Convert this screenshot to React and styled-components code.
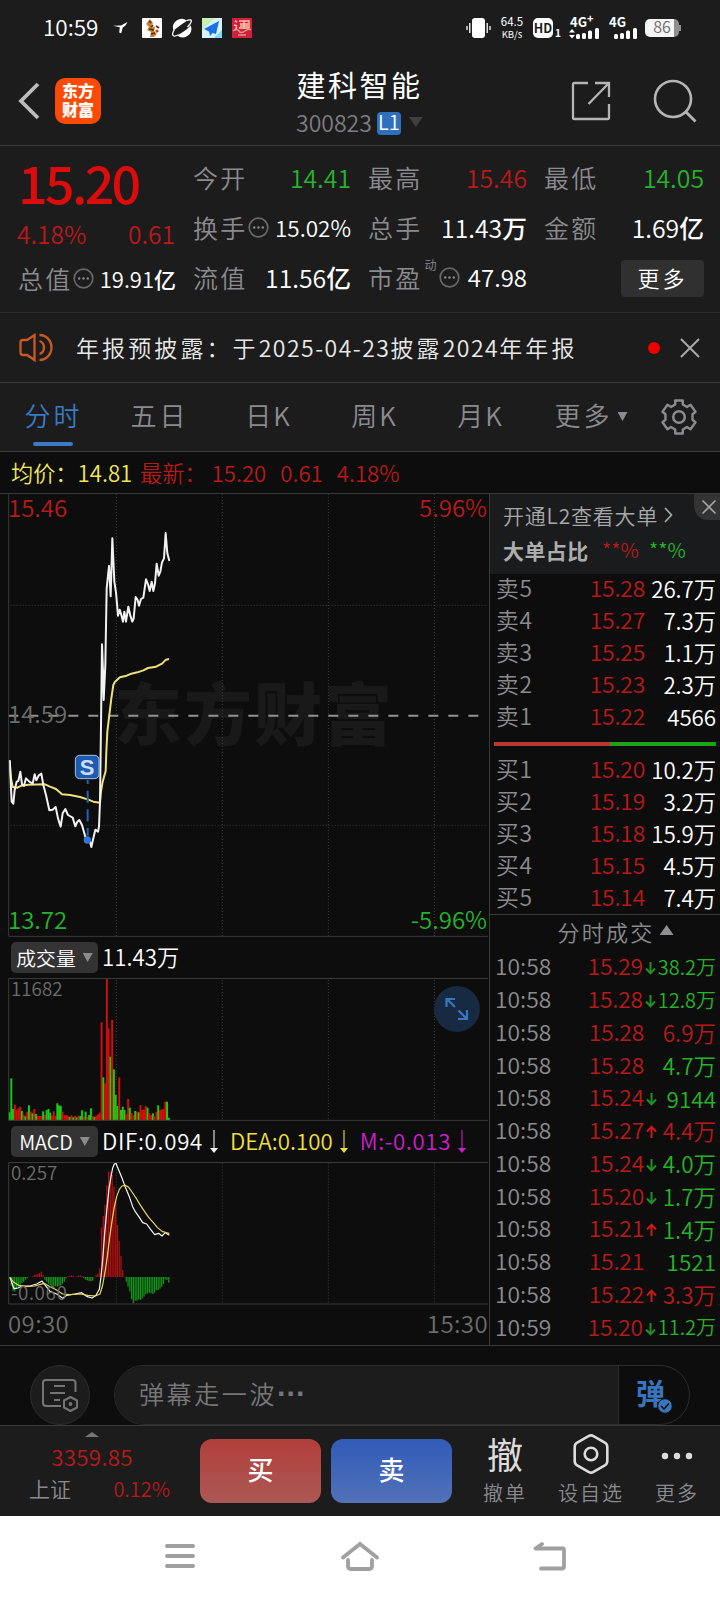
import styled, { createGlobalStyle } from 'styled-components';

const RED = '#b81919';
const GREEN = '#25b32b';
const GRAY = '#8b8b8f';
const LINE = '#3a3a3a';

const tabs = ['五日', '日K', '周K', '月K'];

const stats = [
  { label: '今开', value: '14.41', color: GREEN },
  { label: '最高', value: '15.46', color: RED },
  { label: '最低', value: '14.05', color: GREEN },
  { label: '换手', value: '15.02%', dots: true, size: 22.5 },
  { label: '总手', value: '11.43', unit: '万' },
  { label: '金额', value: '1.69', unit: '亿' },
  { label: '流值', value: '11.56', unit: '亿' },
  { label: '市盈', value: '47.98', sup: '动', dots: true, size: 24 },
];

const sells = [
  ['卖5', '15.28', '26.7万'],
  ['卖4', '15.27', '7.3万'],
  ['卖3', '15.25', '1.1万'],
  ['卖2', '15.23', '2.3万'],
  ['卖1', '15.22', '4566'],
];

const buys = [
  ['买1', '15.20', '10.2万'],
  ['买2', '15.19', '3.2万'],
  ['买3', '15.18', '15.9万'],
  ['买4', '15.15', '4.5万'],
  ['买5', '15.14', '7.4万'],
];

const ticks = [
  ['10:58', '15.29', 'down', '38.2万', GREEN],
  ['10:58', '15.28', 'down', '12.8万', GREEN],
  ['10:58', '15.28', '', '6.9万', RED],
  ['10:58', '15.28', '', '4.7万', GREEN],
  ['10:58', '15.24', 'down', '9144', GREEN],
  ['10:58', '15.27', 'up', '4.4万', RED],
  ['10:58', '15.24', 'down', '4.0万', GREEN],
  ['10:58', '15.20', 'down', '1.7万', GREEN],
  ['10:58', '15.21', 'up', '1.4万', GREEN],
  ['10:58', '15.21', '', '1521', GREEN],
  ['10:58', '15.22', 'up', '3.3万', RED],
  ['10:59', '15.20', 'down', '11.2万', GREEN],
];

// one entry per minute: colour + height
const volumes =
  'g24 g126 g34 r47 r31 r36 r41 g28 r17 g12 r26 g45 r26 g21 r34 g19 r13 r13 r13 g27 r16 g31 g34 g23 r14 r27 r13 g51 g45 g43 r26 r16 r16 r13 g10 r15 g9 r13 g9 r14 g13 g30 r10 g26 r11 g16 g36 r14 g10 r14 r18 r23 r294 g129 r111 r424 r276 g191 r301 g153 g76 g43 r129 g31 g41 g31 r19 r64 g38 r22 r15 g28 r26 g24 r46 r31 r33 r43 g38 r22 r16 g21 r12 r26 g45 r31 r33 r34 r56 g56 g8'
    .split(' ');

// positive goes up from the zero line
const macd = [
  -6, -26, -42, -44, -36, -30, -25, -18, -14, -8, -4, 0, 0, 2, 6, 8, 9, 12, 16, 6,
  -8, -14, -20, -25, -27, -28, -27, -29, -27, -25, -20, -14, -4, 2, 4, 5, 4, 0, 2, 4,
  5, 3, -3, -8, -10, -12, -13, -11, 0, 6, 11, 26, 149, 183, 216, 276, 316, 316, 306, 271,
  221, 156, 108, 63, 21, 0, -14, -29, -44, -67, -79, -71, -71, -67, -69, -64, -59, -51, -49, -47,
  -49, -51, -47, -39, -39, -35, -29, -21, -7, -9, -17,
];

const barX = (i) => 28.5 + i * 5.31;

const Grid = ({ top, bottom }) => (
  <g stroke="#4a4a4a" strokeWidth="2.4" strokeDasharray="3 6">
    {[349, 667, 985, 1303].map((x) => (
      <line key={x} x1={x} x2={x} y1={top} y2={bottom} />
    ))}
  </g>
);

const PriceChart = () => (
  <ChartSvg viewBox="0 27 1467 1329">
    <Grid top={27} bottom={1353} />
    <g stroke="#4a4a4a" strokeWidth="2.4" strokeDasharray="3 6">
      <line x1="32" x2="1464" y1="361" y2="361" />
      <line x1="32" x2="1464" y1="1021" y2="1021" />
    </g>
    <line x1="25" x2="1436" y1="692" y2="692" stroke="#929292" strokeWidth="6" strokeDasharray="30 30" />
    <polyline
      fill="none" stroke="#f0e078" strokeWidth="6" strokeLinejoin="round"
      points="29,828 33,880 38,906 52,908 64,902 85,899 135,898 150,905 168,912 186,928 210,930 240,936 265,944 280,950 300,953 303,920 308,890 317,858 319,800 322,740 328,690 334,640 340,600 345,590 360,577 380,572 394,566 412,562 430,556 444,549 468,545 486,536 498,524 507,522"
    />
    <polyline
      fill="none" stroke="#f2f2f2" strokeWidth="6" strokeLinejoin="round"
      points="29,825 32,890 35,950 40,956 44,915 50,890 55,888 61,860 66,898 72,902 78,880 88,890 98,896 104,868 109,886 116,872 124,866 130,900 138,930 148,976 158,974 167,966 174,1000 182,1025 188,985 196,972 204,990 218,998 226,1024 232,1010 238,1005 246,1020 256,1055 264,1068 270,1070 274,1086 280,1060 286,1034 294,1040 297,1025 300,950 303,720 306,478 309,560 311,645 316,540 320,310 327,243 332,334 337,160 343,290 348,322 354,392 359,374 364,390 369,410 373,380 378,410 385,365 391,392 397,410 401,400 407,336 413,345 417,362 423,342 430,338 438,283 444,298 449,318 455,290 460,318 465,295 470,236 476,272 481,260 486,232 492,220 497,144 502,205 508,228"
    />
    <line x1="263" x2="263" y1="885" y2="1052" stroke="#2462b4" strokeWidth="6" strokeDasharray="36 20" strokeDashoffset="24" />
    <circle cx="262" cy="1065" r="11" fill="#2b78dc" />
    <rect x="226" y="811" width="71" height="70" rx="13" fill="#1e5cb3" stroke="#a9bfdd" strokeWidth="3" />
    <path d="M26 27V1354H1464" fill="none" stroke={LINE} strokeWidth="3" />
  </ChartSvg>
);

const VolumeChart = () => (
  <ChartSvg viewBox="0 114 1467 429">
    <Grid top={120} bottom={540} />
    {volumes.map((v, i) => {
      const h = Number(v.slice(1));
      return <rect key={i} x={barX(i) - 2.9} y={541 - h} width="5.8" height={h} fill={v[0] === 'r' ? '#d60d0d' : '#15cf15'} />;
    })}
    <path d="M1464 115.5H26V541H1464" fill="none" stroke={LINE} strokeWidth="3" />
  </ChartSvg>
);

const MacdChart = () => (
  <ChartSvg viewBox="0 666 1467 429">
    <Grid top={670} bottom={1092} />
    {macd.map((v, i) => (
      <rect key={i} x={barX(i) - 2} y={v > 0 ? 1011 - v : 1011} width="3.8" height={Math.abs(v)} fill={v > 0 ? '#b01010' : '#12961a'} />
    ))}
    <polyline
      fill="none" stroke="#f5f5f5" strokeWidth="3.6" strokeLinejoin="round"
      points="30,1012 36,1030 42,1046 54,1044 66,1038 90,1038 110,1032 126,1023 136,1036 150,1054 170,1062 188,1075 200,1066 224,1062 245,1058 262,1070 276,1074 288,1066 298,1048 303,1010 308,960 314,880 320,815 327,745 333,710 338,684 343,672 348,670 356,690 366,714 376,742 388,770 398,800 406,815 418,832 428,848 440,852 450,866 464,884 476,880 486,888 496,878 508,886"
    />
    <polyline
      fill="none" stroke="#e8d85a" strokeWidth="3.6" strokeLinejoin="round"
      points="30,1012 40,1026 56,1036 76,1040 104,1038 132,1030 150,1040 170,1050 188,1062 210,1064 240,1062 264,1066 286,1068 300,1062 308,1035 316,990 322,950 328,900 335,850 342,805 350,770 358,748 366,738 376,736 386,742 396,756 408,774 420,794 432,812 446,832 460,848 472,862 486,874 498,878 508,880"
    />
    <path d="M1464 667.5H26V1092H1464" fill="none" stroke={LINE} strokeWidth="3" />
  </ChartSvg>
);

const Dots = () => (
  <svg width="21" height="21" viewBox="0 0 21 21">
    <circle cx="10.5" cy="10.5" r="9.3" fill="none" stroke="#68686b" strokeWidth="1.7" />
    <g fill="#8b8b8f">
      <circle cx="6.2" cy="10.5" r="1.2" />
      <circle cx="10.5" cy="10.5" r="1.2" />
      <circle cx="14.8" cy="10.5" r="1.2" />
    </g>
  </svg>
);

const Arrow = ({ dir, color }) => (
  <svg width="11" height="16" viewBox="0 0 11 16">
    <path
      d={dir === 'up' ? 'M5.5 14V3M1 7.5 5.5 2.8 10 7.5' : 'M5.5 2V13M1 8.5 5.5 13.2 10 8.5'}
      fill="none" stroke={color} strokeWidth="2"
    />
  </svg>
);

const LongArrow = ({ color }) => (
  <svg width="10" height="24" viewBox="0 0 10 24">
    <path d="M5 0V22" stroke={color} strokeWidth="1.1" />
    <path d="M1 18h8L5 23z" fill={color} />
  </svg>
);

const Signal = ({ bars }) => (
  <>
    {bars.map(([x, h]) => (
      <rect key={x} x={x} y={22 - h} width="4" height={h} rx="1.5" fill="#fff" />
    ))}
  </>
);

const App = () => {
  return (
    <Screen>
      <Global />
      <StatusBar>
        <Clock>10:59</Clock>
        <NotifyIcons>
          <svg width="15" height="12" viewBox="0 0 15 12">
            <path d="M0 3.8 8 3.4 14.5 0 12.5 3.5 9.8 5.5 8.2 11.3 6.2 10.6 6.8 5.2z" fill="#fff" />
          </svg>
          <svg width="20" height="20" viewBox="0 0 20 20">
            <rect width="20" height="20" rx="1" fill="#fff" />
            <path d="M8 1 11 5 9 8 13 9 12 13 15 16 12 19H8L9 14 5 12 7 9 4 6z" fill="#c9822c" />
            <path d="M7 3 9 5M11 7 9 9M7 11 12 12M14 8 17 10M9 16 13 15" stroke="#4b3018" strokeWidth="1.6" />
            <circle cx="15" cy="13" r="1.6" fill="#cf3b20" />
          </svg>
          <svg width="20" height="20" viewBox="0 0 20 20">
            <path d="M1.5 12.5A8.7 8.7 0 0 1 15 2.7Q9 6.5 1.5 12.5z" fill="#fff" />
            <path d="M18.7 7.5A8.7 8.7 0 0 1 5 17.3Q12.5 14 18.7 7.5z" fill="#fff" />
            <path d="M14.5 2.5Q20.5 .5 19 4.2 18 6.5 15.5 9M2.5 11.5Q-.5 16 1.2 17.6 2.5 18.8 6 17" fill="none" stroke="#fff" strokeWidth="1.3" />
          </svg>
          <svg width="20" height="20" viewBox="0 0 20 20">
            <rect width="20" height="20" fill="#d4f4ff" />
            <path d="M0 0h13L0 12z" fill="#c8efb4" />
            <path d="M12 20 20 12V20z" fill="#7fdcf7" />
            <path d="M17 3 2 11 7 13.5 8 18 10.5 15 14 16z" fill="#1c6fe8" />
          </svg>
          <svg width="20" height="20" viewBox="0 0 20 20">
            <rect width="20" height="20" rx="1" fill="#d31f3c" />
            <path d="M3 3 5 4M2 7 5 8M3 12 5 9M7 3H17V10H7M8 6H16M12 3V11M8 8H16" fill="none" stroke="#f6c9a8" strokeWidth="1.4" />
            <path d="M1 13Q5 10 7 13T13 13T19 12M6 17H14" fill="none" stroke="#d69a8c" strokeWidth="1.5" />
          </svg>
        </NotifyIcons>
        <StatusRight>
          <svg width="25" height="20" viewBox="0 0 25 20">
            <rect x="6" width="13" height="20" rx="3" fill="#fff" />
            <path d="M1 8V12M3.8 5V15M21.2 5V15M24 8V12" stroke="#fff" strokeWidth="1.3" />
          </svg>
          <NetSpeed>
            <span>64.5</span>
            <small>KB/s</small>
          </NetSpeed>
          <HdBadge>
            <b>HD</b>
            <i>1</i>
          </HdBadge>
          <SignalBox $w={32}>
            <span>4G<q>+</q></span>
            <svg width="31" height="22" viewBox="0 0 31 22">
              <path d="M0 15.5 3 12 6 15.5zM0 18 3 21.5 6 18z" fill="#fff" />
              <Signal bars={[[7, 5], [13, 6], [19, 8.5], [26, 11]]} />
            </svg>
          </SignalBox>
          <SignalBox $w={30}>
            <span>4G</span>
            <svg width="31" height="22" viewBox="0 0 31 22">
              <Signal bars={[[6, 5], [12, 6], [18, 8.5], [25, 11]]} />
            </svg>
          </SignalBox>
          <Battery>86</Battery>
        </StatusRight>
      </StatusBar>

      <Header>
        <HeaderSide>
          <svg width="22" height="38" viewBox="0 0 22 38">
            <path d="M20 2 3 19 20 36" fill="none" stroke="#bdbdbd" strokeWidth="3.8" />
          </svg>
          <Logo><span>东方</span><span>财富</span></Logo>
        </HeaderSide>
        <Title>
          <h1>建科智能</h1>
          <p>
            300823<em>L1</em>
            <Triangle $w={14} $h={10} $color="#3f3f3f" />
          </p>
        </Title>
        <HeaderSide $right>
          <svg width="40" height="40" viewBox="0 0 40 40">
            <path d="M17 2H3.5A1.5 1.5 0 0 0 2 3.5V36.5A1.5 1.5 0 0 0 3.5 38H36.5A1.5 1.5 0 0 0 38 36.5V23M24 2H38V16M38 2 17.5 23" fill="none" stroke="#b5b5b5" strokeWidth="2.3" />
          </svg>
          <svg width="44" height="44" viewBox="0 0 44 44">
            <circle cx="20" cy="20" r="18" fill="none" stroke="#b5b5b5" strokeWidth="2.6" />
            <path d="M32.5 32.5 42.5 42.5" stroke="#b5b5b5" strokeWidth="2.8" />
          </svg>
        </HeaderSide>
      </Header>

      <Quote>
        <QuoteMain>
          <Price>15.20</Price>
          <Change>
            <span>4.18%</span>
            <span>0.61</span>
          </Change>
          <Stat>
            <label>总值</label>
            <Dots />
            <StatValue $size={22}>19.91<u>亿</u></StatValue>
          </Stat>
        </QuoteMain>
        <StatGrid>
          {stats.map((s) => (
            <Stat key={s.label}>
              <label>{s.label}</label>
              {s.sup && <sup>{s.sup}</sup>}
              {s.dots && <Dots />}
              <StatValue $color={s.color} $size={s.size}>{s.value}{s.unit && <u>{s.unit}</u>}</StatValue>
            </Stat>
          ))}
          <MoreButton>更多</MoreButton>
        </StatGrid>
      </Quote>

      <News>
        <svg width="35" height="30" viewBox="0 0 35 30">
          <path d="M15.5 2V27L8 22H4Q1.5 22 1.5 19.5V9.5Q1.5 7 4 7H8zM20.5 2A12 12.5 0 0 1 20.5 27M20.5 8A6.3 6.8 0 0 1 20.5 21" fill="none" stroke="#cc5a20" strokeWidth="2.3" />
        </svg>
        <p>年报预披露：于<span>2025-04-23</span>披露<span>2024</span>年年报</p>
        <RedDot />
        <svg width="20" height="20" viewBox="0 0 20 20">
          <path d="M1 1 19 19M19 1 1 19" stroke="#a8a8a8" strokeWidth="2" />
        </svg>
      </News>

      <Tabs>
        <Tab $active>分时</Tab>
        {tabs.map((t) => (
          <Tab key={t} $shift={t.endsWith('K') ? 6 : 0}>{t}</Tab>
        ))}
        <Tab $wide>更多<Triangle $w={10} $h={9} $color={GRAY} /></Tab>
        <svg width="36" height="36" viewBox="0 0 36 36">
          <path
            d="M14.2 1.5H21.8V5.5L26 8 29.5 5.8 34.5 12.8 31.5 15.2V20.8L34.5 23.2 29.5 30.2 26 28 21.8 30.5V34.5H14.2V30.5L10 28 6.5 30.2 1.5 23.2 4.5 20.8V15.2L1.5 12.8 6.5 5.8 10 8 14.2 5.5z"
            fill="none" stroke={GRAY} strokeWidth="2.4" strokeLinejoin="round"
          />
          <circle cx="18" cy="18" r="5.8" fill="none" stroke={GRAY} strokeWidth="2.5" />
        </svg>
      </Tabs>

      <AvgBar>
        <Avg>均价：<span>14.81</span></Avg>
        <span>最新：</span>
        <span>15.20</span>
        <span>0.61</span>
        <span>4.18%</span>
      </AvgBar>

      <Main>
        <Charts>
          <PricePane>
            <Watermark>东方财富</Watermark>
            <PriceChart />
            <SellMark>S</SellMark>
            <AxisRow $color={RED}><span>15.46</span><span>5.96%</span></AxisRow>
            <AxisRow $color="#6c6c6c"><span>14.59</span></AxisRow>
            <AxisRow $color={GREEN}><span>13.72</span><span>-5.96%</span></AxisRow>
          </PricePane>
          <PaneHead>
            <Chip>成交量<Triangle $w={10} $h={9} $color={GRAY} /></Chip>
            <span>11.43万</span>
          </PaneHead>
          <SubPane>
            <VolumeChart />
            <small>11682</small>
            <Expand>
              <svg width="24" height="24" viewBox="0 0 24 24">
                <path d="M10 10 2 2M1.5 10V2H10M13.5 13.5 21.5 21.5M22 13V22H13" fill="none" stroke="#3678c4" strokeWidth="2.2" />
              </svg>
            </Expand>
          </SubPane>
          <PaneHead>
            <Chip>MACD<Triangle $w={10} $h={9} $color={GRAY} /></Chip>
            <Dif>DIF:0.094</Dif>
            <LongArrow color="#eee" />
            <Dea>DEA:0.100</Dea>
            <LongArrow color="#efdf3c" />
            <Hist>M:-0.013</Hist>
            <LongArrow color="#cb1fcb" />
          </PaneHead>
          <SubPane>
            <MacdChart />
            <small>0.257</small>
            <small>-0.060</small>
          </SubPane>
          <TimeRow><span>09:30</span><span>15:30</span></TimeRow>
        </Charts>

        <Side>
          <Promo>
            <p>开通L2查看大单
              <svg width="9" height="16" viewBox="0 0 9 16"><path d="M1 1 7.5 8 1 15" fill="none" stroke="#a8a8ab" strokeWidth="1.7" /></svg>
            </p>
            <Ratio>
              <b>大单占比</b>
              <i>**%</i>
              <em>**%</em>
            </Ratio>
            <CloseTag>
              <svg width="16" height="16" viewBox="0 0 16 16"><path d="M1.5 1.5 14.5 14.5M14.5 1.5 1.5 14.5" stroke="#a5a5a5" strokeWidth="1.7" /></svg>
            </CloseTag>
          </Promo>
          {sells.map(([name, price, amount]) => (
            <Level key={name}><span>{name}</span><b>{price}</b><i>{amount}</i></Level>
          ))}
          <Balance><div /><div /></Balance>
          {buys.map(([name, price, amount]) => (
            <Level key={name}><span>{name}</span><b>{price}</b><i>{amount}</i></Level>
          ))}
          <DealTitle>分时成交<Triangle $up $w={14} $h={10} $color="#8f8f93" /></DealTitle>
          <Deals>
            {ticks.map(([time, price, dir, amount, color], i) => (
              <Deal key={i} $color={color} $small={dir && amount.length > 4}>
                <span>{time}</span>
                <b>{price}</b>
                <div>{dir && <Arrow dir={dir} color={dir === 'up' ? '#c91919' : '#218f28'} />}</div>
                <i>{amount}</i>
              </Deal>
            ))}
          </Deals>
        </Side>
      </Main>

      <Danmu>
        <RoundButton>
          <svg width="38" height="34" viewBox="0 0 38 34">
            <path d="M34.5 14V5Q34.5 2 31.5 2H5Q2 2 2 5V25Q2 28 5 28H20" fill="none" stroke="#747474" strokeWidth="2" />
            <path d="M13 8H24M9 15H24M13 22H19" stroke="#747474" strokeWidth="2" />
            <path d="M29.5 19 36 22.5V29.5L29.5 33 23 29.5V22.5z" fill="none" stroke="#747474" strokeWidth="2" strokeLinejoin="round" />
            <circle cx="29.5" cy="26" r="1.9" fill="#747474" />
          </svg>
        </RoundButton>
        <DanmuInput>
          <p>弹幕走一波<span>···</span></p>
          <DanmuToggle>
            弹
            <svg width="16" height="16" viewBox="0 0 16 16">
              <circle cx="8" cy="8" r="7.3" fill="#3775bd" stroke="#0d0d0d" />
              <path d="M4 8 7 11 12 5.5" fill="none" stroke="#0d0d0d" strokeWidth="1.5" />
            </svg>
          </DanmuToggle>
        </DanmuInput>
      </Danmu>

      <BottomBar>
        <IndexBox>
          <Triangle $up $w={14} $h={5} $color="#77777b" />
          <strong>3359.85</strong>
          <div><span>上证</span><em>0.12%</em></div>
        </IndexBox>
        <TradeButton $from="#b23f3b" $to="#ab5854">买</TradeButton>
        <TradeButton $from="#325bb8" $to="#5272b8">卖</TradeButton>
        <Action>
          <Glyph>撤</Glyph>
          <span>撤单</span>
        </Action>
        <Action>
          <svg width="36" height="40" viewBox="0 0 36 40">
            <path d="M15.5 2.1Q18 .7 20.5 2.1L31.8 8.5Q34.3 10 34.3 13V27Q34.3 30 31.8 31.5L20.5 37.9Q18 39.3 15.5 37.9L4.2 31.5Q1.7 30 1.7 27V13Q1.7 10 4.2 8.5z" fill="none" stroke="#dcdcdc" strokeWidth="2.6" />
            <circle cx="18" cy="20" r="6.3" fill="none" stroke="#dcdcdc" strokeWidth="2.6" />
          </svg>
          <span>设自选</span>
        </Action>
        <Action>
          <svg width="32" height="40" viewBox="0 0 32 40">
            <g fill="#dcdcdc">
              <circle cx="4" cy="22" r="3.2" />
              <circle cx="16" cy="22" r="3.2" />
              <circle cx="28" cy="22" r="3.2" />
            </g>
          </svg>
          <span>更多</span>
        </Action>
      </BottomBar>

      <NavBar>
        <svg width="30" height="26" viewBox="0 0 30 26">
          <path d="M2 3H28M2 13H28M2 23H28" stroke="#a0a0a0" strokeWidth="4" strokeLinecap="round" />
        </svg>
        <svg width="40" height="32" viewBox="0 0 40 32">
          <path d="M3 17.5 20 4 37 17.5M8 20V26Q8 29 11 29H29Q32 29 32 26V20" fill="none" stroke="#a0a0a0" strokeWidth="3.8" strokeLinecap="round" />
        </svg>
        <svg width="34" height="30" viewBox="0 0 34 30">
          <path d="M9 3 2.5 7.5H30Q31 7.5 31 9.5V25.5Q31 27.5 29 27.5H8" fill="none" stroke="#a0a0a0" strokeWidth="3.8" strokeLinecap="round" strokeLinejoin="round" />
        </svg>
      </NavBar>
    </Screen>
  );
};

export default App;

const Global = createGlobalStyle`
* { box-sizing: border-box; }
body { margin: 0; background: #1c1c1c; }
h1, p { margin: 0; font-weight: inherit; }
i, em { font-style: normal; }
u { text-decoration: none; font-weight: 500; }
svg { display: block; flex-shrink: 0; }
`;

const Screen = styled.div`
width: 720px;
height: 1600px;
display: flex;
flex-direction: column;
overflow: hidden;
background: #1c1c1c;
color: #fff;
font-family: "Noto Sans CJK SC", "Noto Sans", sans-serif;
font-weight: 350;
line-height: 1;
white-space: nowrap;
`;

const Triangle = styled.span`
flex-shrink: 0;
width: ${(p) => p.$w}px;
height: ${(p) => p.$h}px;
background: ${(p) => p.$color};
clip-path: ${(p) => (p.$up ? 'polygon(50% 0, 100% 100%, 0 100%)' : 'polygon(0 0, 100% 0, 50% 100%)')};
`;

const StatusBar = styled.div`
height: 56px;
display: flex;
align-items: center;
padding: 0 41px 0 43px;
`;

const Clock = styled.div`
width: 70px;
font-size: 22.5px;
padding-bottom: 3px;
`;

const NotifyIcons = styled.div`
display: flex;
align-items: center;
gap: 10px;
svg:first-child { margin-right: 4px; }
`;

const StatusRight = styled.div`
margin-left: auto;
display: flex;
align-items: center;
`;

const NetSpeed = styled.div`
margin-left: 9px;
width: 24px;
display: flex;
flex-direction: column;
align-items: center;
font-size: 11.5px;
font-weight: 400;
line-height: 13px;
padding-bottom: 2px;
small { font-size: 9.5px; line-height: 12px; }
`;

const HdBadge = styled.div`
margin-left: 9px;
display: flex;
align-items: flex-end;
width: 36px;
b {
    width: 20px;
    height: 20px;
    border-radius: 5px;
    background: #fff;
    color: #1c1c1c;
    font-size: 12.5px;
    font-weight: 700;
    line-height: 19px;
    text-align: center;
}
i { margin-left: 2px; font-size: 10px; font-weight: 700; }
`;

const SignalBox = styled.div`
position: relative;
width: ${(p) => p.$w}px;
height: 22px;
margin-right: 7px;
span {
    position: absolute;
    left: 1px;
    top: -2px;
    font-size: 13px;
    font-weight: 700;
    display: flex;
}
q { quotes: none; font-size: 11px; margin-top: -2px; }
`;

const Battery = styled.div`
position: relative;
width: 34px;
height: 18px;
border-radius: 5px;
background: linear-gradient(90deg, #f5f5f5 86%, #8f8f8f 86%);
color: #6b6b6b;
font-size: 16px;
line-height: 15px;
text-align: center;
&::after {
    content: "";
    position: absolute;
    right: -2px;
    top: 6px;
    width: 2px;
    height: 6px;
    background: #8f8f8f;
}
`;

const Header = styled.div`
height: 90px;
display: flex;
align-items: center;
padding: 0 23px 0 18px;
border-bottom: 1px solid ${LINE};
`;

const HeaderSide = styled.div`
flex: 0 0 150px;
display: flex;
align-items: center;
gap: ${(p) => (p.$right ? 42 : 15)}px;
justify-content: ${(p) => (p.$right ? 'flex-end' : 'flex-start')};
`;

const Logo = styled.div`
width: 46px;
height: 46px;
display: flex;
flex-direction: column;
align-items: center;
justify-content: center;
border-radius: 10px;
background: #fb4a06;
font-size: 16px;
font-weight: 900;
line-height: 19px;
padding-bottom: 1px;
`;

const Title = styled.div`
flex: 1;
display: flex;
flex-direction: column;
align-items: center;
padding: 3px 0 0 4px;
h1 {
    font-size: 29px;
    letter-spacing: 2.5px;
    font-weight: 400;
    height: 40px;
}
p {
    display: flex;
    align-items: center;
    font-size: 23px;
    color: #7c7c80;
    height: 24px;
}
em {
    margin: 2px 8px 0 5px;
    width: 24px;
    height: 23px;
    border-radius: 4px;
    background: #2f70bd;
    color: #fff;
    font-size: 20px;
    line-height: 19px;
    text-align: center;
}
`;

const Quote = styled.div`
height: 167px;
display: flex;
padding: 6px 15px 0 18px;
border-bottom: 1px solid #2b2b2b;
`;

const QuoteMain = styled.div`
width: 158px;
display: flex;
flex-direction: column;
`;

const Price = styled.div`
height: 63px;
color: #dc0c0c;
font-size: 52px;
font-weight: 500;
line-height: 59px;
letter-spacing: -2.7px;
`;

const Change = styled.div`
height: 38px;
display: flex;
justify-content: space-between;
align-items: center;
color: ${RED};
font-size: 24.5px;
padding: 1px 1px 0 0;
margin-left: -1px;
`;

const StatGrid = styled.div`
flex: 1;
margin-left: 17px;
display: grid;
grid-template-columns: 158px 159px 160px;
grid-template-rows: 50px 50px 50px;
column-gap: 17px;
`;

const Stat = styled.div`
height: 50px;
display: flex;
align-items: center;
label {
    color: ${GRAY};
    font-size: 25px;
    letter-spacing: 2.3px;
}
sup {
    align-self: flex-start;
    font-size: 12px;
    margin: 7px 2px 0 2px;
    color: ${GRAY};
}
`;

const StatValue = styled.span`
margin-left: auto;
color: ${(p) => p.$color || '#fff'};
font-size: ${(p) => p.$size || 24.8}px;
`;

const MoreButton = styled.div`
align-self: center;
justify-self: end;
width: 83px;
height: 37px;
border-radius: 4px;
background: #303030;
font-size: 22px;
letter-spacing: 3px;
line-height: 34px;
text-align: center;
margin-top: 3px;
`;

const News = styled.div`
height: 70px;
display: flex;
align-items: center;
padding: 0 20px 0 19px;
border-bottom: 1px solid ${LINE};
p {
    flex: 1;
    margin-left: 22px;
    font-size: 23px;
    letter-spacing: 3.1px;
    color: #e9e9e9;
    padding-bottom: 1px;
}
p span { letter-spacing: 1.5px; }
`;

const RedDot = styled.div`
width: 12px;
height: 12px;
margin-right: 20px;
border-radius: 50%;
background: #ec0000;
`;

const Tabs = styled.div`
height: 69px;
display: flex;
align-items: center;
border-bottom: 1px solid ${LINE};
`;

const Tab = styled.div`
position: relative;
width: ${(p) => (p.$wide ? 122 : 107)}px;
height: 68px;
display: flex;
align-items: center;
justify-content: center;
padding: 0 0 4px ${(p) => p.$shift || 0}px;
font-size: 26px;
letter-spacing: ${(p) => (p.$shift ? 2 : 3)}px;
color: ${(p) => (p.$active ? '#3a7ac6' : GRAY)};
margin-right: ${(p) => (p.$wide ? 9 : -1)}px;
&::after {
    content: "";
    display: ${(p) => (p.$active ? 'block' : 'none')};
    position: absolute;
    left: 33px;
    bottom: 5px;
    width: 40px;
    height: 4px;
    border-radius: 2px;
    background: #3a7ac6;
}
${Triangle} { margin: 3px 0 0 5px; }
`;

const AvgBar = styled.div`
height: 42px;
display: flex;
align-items: center;
padding: 0 0 0 11px;
background: #0d0d0d;
border-bottom: 1px solid ${LINE};
color: ${RED};
font-size: 22.2px;
span { margin-right: 14px; }
> span:nth-child(2) { margin-right: 5px; }
`;

const Avg = styled.div`
color: #f1e75c;
width: 129px;
`;

const Main = styled.div`
height: 852px;
display: flex;
background: #0d0d0d;
border-bottom: 1px solid ${LINE};
`;

const Charts = styled.div`
width: 490px;
flex-shrink: 0;
border-right: 1px solid ${LINE};
`;

const ChartSvg = styled.svg`
position: absolute;
left: 0;
top: 0;
width: 489px;
height: 100%;
`;

const PricePane = styled.div`
position: relative;
height: 443px;
display: flex;
flex-direction: column;
justify-content: space-between;
padding: 1px 2px 3px 8px;
`;

const AxisRow = styled.div`
position: relative;
height: 27px;
display: flex;
justify-content: space-between;
color: ${(p) => p.$color};
font-size: 24px;
line-height: 24px;
`;

const Watermark = styled.div`
position: absolute;
left: 114px;
top: 183px;
color: #191919;
font-size: 68px;
font-weight: 900;
letter-spacing: 2px;
`;

const SellMark = styled.div`
position: absolute;
left: 75px;
top: 260px;
width: 24px;
color: #cddcf0;
font-family: "Liberation Sans", sans-serif;
font-size: 22px;
font-weight: 700;
line-height: 27px;
text-align: center;
`;

const PaneHead = styled.div`
height: 41px;
display: flex;
align-items: center;
padding-left: 11px;
font-size: 22.3px;
span { padding-bottom: 2px; }
svg { margin: 0 11px 0 6px; }
`;

const Chip = styled.div`
width: 87px;
height: 31px;
margin-right: 4px;
display: flex;
align-items: center;
justify-content: center;
gap: 7px;
border-radius: 5px;
background: #333;
font-size: 19.8px;
`;

const Dif = styled.span`
letter-spacing: .7px;
`;

const Dea = styled.span`
color: #efdf3c;
`;

const Hist = styled.span`
color: #cb1fcb;
letter-spacing: .6px;
`;

const SubPane = styled.div`
position: relative;
height: 143px;
display: flex;
flex-direction: column;
justify-content: space-between;
padding: 1px 0 3px 11px;
small {
    position: relative;
    font-size: 18.8px;
    color: #6c6c6c;
}
small + small { letter-spacing: .6px; }
`;

const Expand = styled.div`
position: absolute;
right: 9px;
top: 8px;
width: 46px;
height: 46px;
border-radius: 50%;
display: flex;
align-items: center;
justify-content: center;
background: #182a41;
`;

const TimeRow = styled.div`
height: 38px;
display: flex;
justify-content: space-between;
align-items: center;
padding: 0 1px 2px 8px;
color: #6c6c6c;
font-size: 24px;
letter-spacing: .4px;
`;

const Side = styled.div`
flex: 1;
min-width: 0;
display: flex;
flex-direction: column;
`;

const Promo = styled.div`
position: relative;
height: 80px;
flex-shrink: 0;
padding: 9px 0 0 13px;
background: #1a1b1d;
margin-bottom: -1px;
p {
    display: flex;
    align-items: center;
    gap: 6px;
    height: 24px;
    font-size: 21px;
    letter-spacing: .8px;
    color: #a8a8ab;
}
`;

const Ratio = styled.div`
display: flex;
align-items: center;
height: 46px;
font-size: 20px;
b { font-size: 21px; font-weight: 700; color: #adadad; width: 99px; letter-spacing: .4px; }
i { color: ${RED}; width: 47px; }
em { color: ${GREEN}; }
`;

const CloseTag = styled.div`
position: absolute;
right: 0;
top: 0;
width: 26px;
height: 26px;
padding-left: 4px;
border-radius: 0 0 0 14px;
background: #333;
display: flex;
align-items: center;
justify-content: center;
`;

const Level = styled.div`
height: 32px;
flex-shrink: 0;
display: flex;
align-items: center;
padding: 0 4px 2px 6px;
font-size: 22.8px;
span { width: 60px; color: ${GRAY}; letter-spacing: .8px; }
b { width: 89px; text-align: right; font-weight: 350; color: ${RED}; letter-spacing: -.2px; }
i { flex: 1; display: flex; justify-content: flex-end; font-size: 22.4px; letter-spacing: -.1px; }
`;

const Balance = styled.div`
display: flex;
flex-shrink: 0;
height: 4px;
margin: 9px 4px 8px 4px;
div:first-child { width: 116px; background: #bb3734; }
div:last-child { flex: 1; background: #1fa01f; }
`;

const DealTitle = styled.div`
height: 38px;
flex-shrink: 0;
display: flex;
align-items: center;
justify-content: center;
gap: 5px;
padding: 0 0 5px 21px;
border-top: 1px solid ${LINE};
font-size: 22px;
letter-spacing: 2.3px;
color: ${GRAY};
${Triangle} { margin-bottom: 2px; }
`;

const Deals = styled.div`
flex: 1;
display: flex;
flex-direction: column;
`;

const Deal = styled.div`
height: 32.75px;
display: flex;
align-items: center;
padding: 0 4px 3px 5px;
font-size: 22.8px;
span { width: 60px; color: ${GRAY}; }
b { width: 89px; text-align: right; font-weight: 350; color: ${RED}; letter-spacing: -.2px; }
div { width: 15px; padding: 3px 0 0 2px; }
i { flex: 1; display: flex; justify-content: flex-end; font-size: ${(p) => (p.$small ? 20 : 22.5)}px; color: ${(p) => p.$color}; }
`;

const Danmu = styled.div`
height: 79px;
display: flex;
align-items: flex-end;
padding: 0 30px;
background: #0d0d0d;
`;

const RoundButton = styled.div`
width: 60px;
height: 60px;
margin-right: 24px;
border: 1px solid #2c2c2c;
border-radius: 50%;
background: #1c1c1c;
display: flex;
align-items: center;
justify-content: center;
`;

const DanmuInput = styled.div`
flex: 1;
height: 60px;
display: flex;
border: 1px solid #2c2c2c;
border-radius: 30px;
overflow: hidden;
p {
    flex: 1;
    padding-left: 24px;
    background: #1c1c1c;
    color: #77777a;
    font-size: 25px;
    letter-spacing: 2.6px;
    line-height: 54px;
}
p span {
    font-family: "Liberation Sans", sans-serif;
    font-weight: 700;
    font-size: 30px;
    line-height: 50px;
    letter-spacing: -.5px;
}
`;

const DanmuToggle = styled.div`
position: relative;
width: 71px;
border-left: 1px solid #2c2c2c;
padding-left: 17px;
color: #3775bd;
font-size: 29px;
font-weight: 700;
line-height: 53px;
svg { position: absolute; left: 38px; top: 32px; }
`;

const BottomBar = styled.div`
height: 91px;
display: flex;
align-items: flex-start;
border-top: 1px solid ${LINE};
`;

const IndexBox = styled.div`
width: 200px;
flex-shrink: 0;
padding: 6px 16px 0 0;
display: flex;
flex-direction: column;
align-items: center;
color: ${RED};
strong { font-size: 22.3px; font-weight: 350; letter-spacing: .3px; margin-top: 8px; }
div { display: flex; align-items: center; width: 141px; justify-content: space-between; font-size: 20px; margin: 10px 0 0 15px; }
span { color: ${GRAY}; font-size: 21px; padding-top: 1px; }
em { padding-top: 1px; }
`;

const TradeButton = styled.div`
width: 121px;
height: 64px;
flex-shrink: 0;
margin: 13px 10px 0 0;
border-radius: 12px;
background: linear-gradient(${(p) => p.$from}, ${(p) => p.$to});
font-size: 26px;
font-weight: 500;
line-height: 60px;
text-align: center;
`;

const Action = styled.div`
width: 86px;
padding-top: 8px;
display: flex;
flex-direction: column;
align-items: center;
color: ${GRAY};
span { font-size: 20px; letter-spacing: 2px; margin-top: 9px; }
`;

const Glyph = styled.div`
height: 40px;
font-size: 36px;
font-weight: 400;
line-height: 38px;
color: #dcdcdc;
`;

const NavBar = styled.div`
height: 84px;
background: #fff;
display: flex;
align-items: center;
justify-content: space-between;
padding: 0 153px 4px 165px;
svg:nth-child(2) { margin-right: 8px; }
`;
